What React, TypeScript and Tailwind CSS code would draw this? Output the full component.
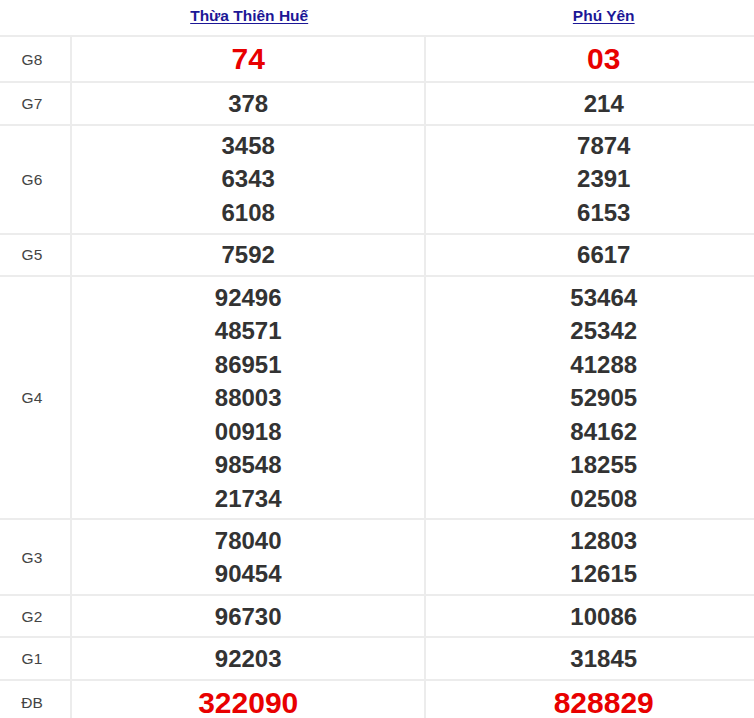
const provinces = ["Thừa Thiên Huế", "Phú Yên"];

type Prize = { label: string; red?: boolean; values: string[][] };

const prizes: Prize[] = [
  { label: "G8", red: true, values: [["74"], ["03"]] },
  { label: "G7", values: [["378"], ["214"]] },
  { label: "G6", values: [["3458", "6343", "6108"], ["7874", "2391", "6153"]] },
  { label: "G5", values: [["7592"], ["6617"]] },
  {
    label: "G4",
    values: [
      ["92496", "48571", "86951", "88003", "00918", "98548", "21734"],
      ["53464", "25342", "41288", "52905", "84162", "18255", "02508"],
    ],
  },
  { label: "G3", values: [["78040", "90454"], ["12803", "12615"]] },
  { label: "G2", values: [["96730"], ["10086"]] },
  { label: "G1", values: [["92203"], ["31845"]] },
  { label: "ĐB", red: true, values: [["322090"], ["828829"]] },
];

export default function App() {
  return (
    <div className="w-[754px] h-[718px] overflow-hidden bg-white font-['Liberation_Sans',Arial,sans-serif]">
      <div className="w-[781px]">
        {/* header */}
        <div className="flex h-[37px] border-b-2 border-[#ececec]">
          <div className="w-[72px]" />
          {provinces.map((p) => (
            <div key={p} className="w-[355px] flex items-center justify-center pb-[3px]">
              <a href="#" className="text-[15.5px] font-bold text-[#1c1796] underline underline-offset-2">
                {p}
              </a>
            </div>
          ))}
        </div>

        {prizes.map((row) => (
          <div key={row.label} className="flex border-b-2 border-[#ececec]">
            <div className="w-[72px] border-r-2 border-[#ececec] flex items-center justify-center pr-[6px] text-[15.5px] text-[#444]">
              {row.label}
            </div>
            {row.values.map((col, i) => (
              <div
                key={i}
                className={
                  i === 0
                    ? "w-[355px] border-r-2 border-[#ececec] py-[3.4px] text-center"
                    : "w-[355px] py-[3.4px] text-center"
                }
              >
                {col.map((v) => (
                  <div
                    key={v}
                    className={
                      row.red
                        ? "text-[30px] leading-[37.5px] font-bold text-[#e80000]"
                        : "text-[24px] leading-[33.5px] font-bold text-[#333]"
                    }
                  >
                    {v}
                  </div>
                ))}
              </div>
            ))}
          </div>
        ))}
      </div>
    </div>
  );
}
